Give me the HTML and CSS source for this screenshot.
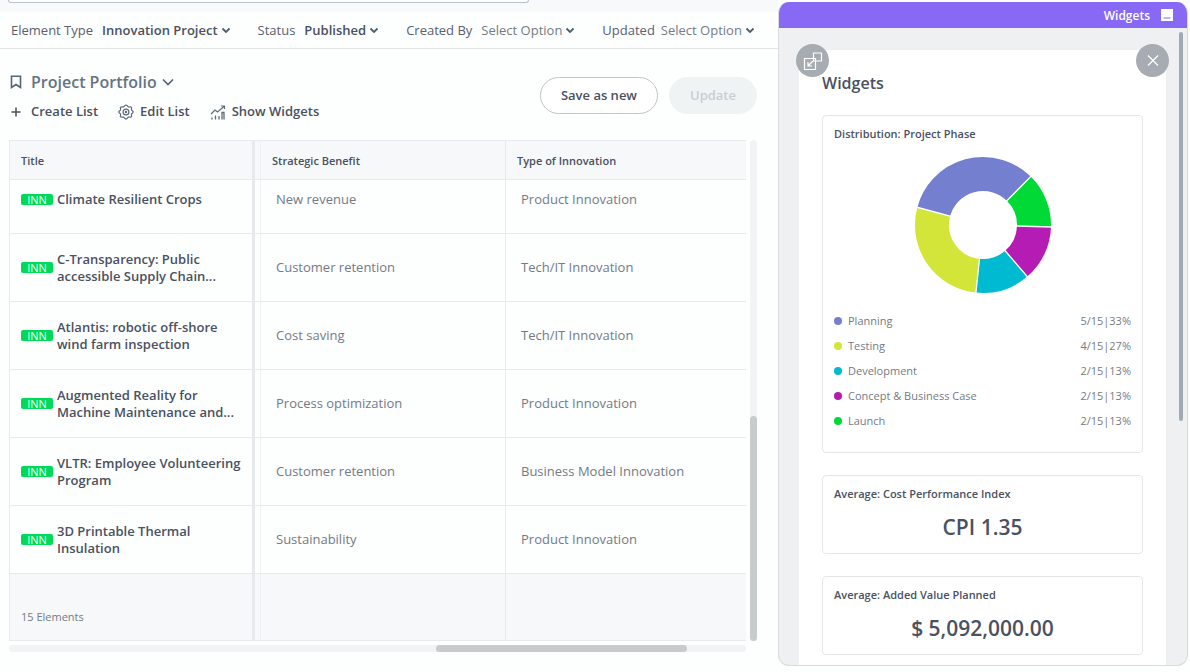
FILE: index.html
```
<!DOCTYPE html>
<html lang="en">
<head>
<meta charset="utf-8">
<title>Project Portfolio</title>
<link rel="stylesheet" href="styles.css">
</head>
<body>
<div class="app">
  <main class="main">
    <div class="search-strip"><div class="search-box"></div></div>
    <nav class="filters" aria-label="Filters">
      <div class="filter">
        <span class="filter-label" id="f1">Element Type</span>
        <button class="filter-value is-set" aria-describedby="f1">Innovation Project<svg class="chev" viewBox="0 0 10 10"><path d="M1.5 3.5 5 7l3.5-3.5"/></svg></button>
      </div>
      <div class="filter">
        <span class="filter-label" id="f2">Status</span>
        <button class="filter-value is-set" aria-describedby="f2">Published<svg class="chev" viewBox="0 0 10 10"><path d="M1.5 3.5 5 7l3.5-3.5"/></svg></button>
      </div>
      <div class="filter">
        <span class="filter-label" id="f3">Created By</span>
        <button class="filter-value" aria-describedby="f3">Select Option<svg class="chev" viewBox="0 0 10 10"><path d="M1.5 3.5 5 7l3.5-3.5"/></svg></button>
      </div>
      <div class="filter filter-tight">
        <span class="filter-label" id="f4">Updated</span>
        <button class="filter-value" aria-describedby="f4">Select Option<svg class="chev" viewBox="0 0 10 10"><path d="M1.5 3.5 5 7l3.5-3.5"/></svg></button>
      </div>
    </nav>
    <header class="list-head">
      <div class="list-info">
        <button class="list-title">
          <svg class="bookmark" viewBox="0 0 12 14"><path d="M1.5 1.2h9v11.3L6 9.5l-4.500 3z"/></svg>
          <span>Project Portfolio</span>
          <svg class="title-chev" viewBox="0 0 12 12"><path d="M1 3.5 6 8.5l5-5"/></svg>
        </button>
        <div class="actions">
          <button class="action"><svg class="plus" viewBox="0 0 10 10"><path d="M5 .5v9M.5 5h9"/></svg>Create List</button>
          <button class="action"><svg class="tool" viewBox="0 0 16 16"><path d="M8 1c1.200 0 1.400 1.500 2.400 1.900s2.100-.6 2.900.2-.2 1.900.2 2.800S15.200 7 15.200 8s-1.300 1.200-1.700 2.100.6 2-.2 2.800-1.900-.2-2.900.2S9.200 15 8 15s-1.400-1.500-2.400-1.900-2.100.6-2.900-.2.200-1.900-.2-2.800S.8 9 .8 8s1.300-1.200 1.700-2.100-.6-2 .2-2.800 1.900.2 2.900-.2S6.800 1 8 1z"/><circle cx="8" cy="8" r="2.900"/><circle cx="8" cy="8" r=".6" class="solid"/></svg>Edit List</button>
          <button class="action"><svg class="tool" viewBox="0 0 16 16"><path d="M1 10 5 6l2.500 2L14 2.500M11 2h3.500v3"/><path d="M2 15.500v-2M5.500 15.500v-4M9 15.500v-3.500M12 15.500V8.500h2v7" class="bars"/></svg>Show Widgets</button>
        </div>
      </div>
      <div class="list-buttons">
        <button class="pill">Save as new</button>
        <button class="pill pill-off" disabled>Update</button>
      </div>
    </header>
    <section class="grid">
      <table class="table">
        <colgroup><col class="c-title"><col class="c-gap"><col class="c-benefit"><col></colgroup>
        <thead><tr><th>Title</th><td class="split"></td><th>Strategic Benefit</th><th>Type of Innovation</th></tr></thead>
        <tbody>
          <tr class="cut"><td><div class="item"><span class="tag">INN</span><span>Climate Resilient Crops</span></div></td><td class="split"></td><td>New revenue</td><td>Product Innovation</td></tr>
          <tr><td><div class="item"><span class="tag">INN</span><span>C-Transparency: Public accessible Supply Chain...</span></div></td><td class="split"></td><td>Customer retention</td><td>Tech/IT Innovation</td></tr>
          <tr><td><div class="item"><span class="tag">INN</span><span>Atlantis: robotic off-shore wind farm inspection</span></div></td><td class="split"></td><td>Cost saving</td><td>Tech/IT Innovation</td></tr>
          <tr><td><div class="item"><span class="tag">INN</span><span>Augmented Reality for Machine Maintenance and...</span></div></td><td class="split"></td><td>Process optimization</td><td>Product Innovation</td></tr>
          <tr><td><div class="item"><span class="tag">INN</span><span>VLTR: Employee Volunteering Program</span></div></td><td class="split"></td><td>Customer retention</td><td>Business Model Innovation</td></tr>
          <tr><td><div class="item"><span class="tag">INN</span><span>3D Printable Thermal Insulation</span></div></td><td class="split"></td><td>Sustainability</td><td>Product Innovation</td></tr>
        </tbody>
        <tfoot><tr><td>15 Elements</td><td class="split"></td><td></td><td></td></tr></tfoot>
      </table>
      <div class="track-v"><div class="thumb-v"></div></div>
      <div class="track-h"><div class="thumb-h"></div></div>
    </section>
  </main>
  <aside class="panel">
    <div class="panel-bar">
      <span>Widgets</span>
      <button class="minimize" aria-label="Minimize"><svg viewBox="0 0 12 12"><path d="M0 0h12v12H0z" fill="#fff"/><path d="M2.500 9h7" stroke="#8769f5" stroke-width="1"/></svg></button>
    </div>
    <div class="panel-body">
      <div class="sheet">
        <button class="round round-left" aria-label="Pop out"><svg viewBox="0 0 20 20"><path d="M1.500 7.500h11v11h-11zM10.500 2h8v8h-8zM10 10l-5 5M5 11v4h4"/></svg></button>
        <button class="round round-right" aria-label="Close"><svg viewBox="0 0 20 20"><path d="m5 4.500 10 10M15 4.500l-10 10"/></svg></button>
        <h2>Widgets</h2>
        <section class="card">
          <h3>Distribution: Project Phase</h3>
          <svg class="donut" viewBox="-70 -70 140 140">
            <g fill="none" stroke-width="34">
              <path stroke="#747fcf" d="M-49.300-13.200A51 51 0 0 1 35.800-36.300"/>
              <path stroke="#00d936" d="M35.800-36.300A51 51 0 0 1 51 1.500"/>
              <path stroke="#b41cb4" d="M51 1.500A51 51 0 0 1 33.200 38.700"/>
              <path stroke="#00bad1" d="M33.200 38.700A51 51 0 0 1-5.300 50.700"/>
              <path stroke="#d4e53a" d="M-5.300 50.700A51 51 0 0 1-49.300-13.200"/>
            </g>
            <path stroke="#fff" stroke-width="1.300" d="M-30.900-8.300-67-18M23.200-23.600 48.700-49.400M33 1 69 2M21.500 25 45.500 53M-3.400 32.800-7.200 69"/>
          </svg>
          <ul class="legend">
            <li><i class="dot planning"></i>Planning<b>5/15|33%</b></li>
            <li><i class="dot testing"></i>Testing<b>4/15|27%</b></li>
            <li><i class="dot development"></i>Development<b>2/15|13%</b></li>
            <li><i class="dot concept"></i>Concept &amp; Business Case<b>2/15|13%</b></li>
            <li><i class="dot launch"></i>Launch<b>2/15|13%</b></li>
          </ul>
        </section>
        <section class="card"><h3>Average: Cost Performance Index</h3><p class="figure">CPI 1.35</p></section>
        <section class="card"><h3>Average: Added Value Planned</h3><p class="figure">$ 5,092,000.00</p></section>
      </div>
      <div class="panel-scroll"></div>
    </div>
  </aside>
</div>
</body>
</html>
```
FILE: styles.css
```
* { box-sizing: border-box; }
body { margin: 0; background: #fdfefe; color: #4a5161; font-family: "Open Sans", "Noto Sans", sans-serif; font-size: 13px; line-height: 17px; }
button { margin: 0; padding: 0; border: 0; background: none; color: inherit; font: inherit; }
svg { display: block; flex: none; fill: none; }
h2, h3, p, ul { margin: 0; padding: 0; }

.app { display: flex; height: 100vh; overflow: hidden; }
.main { flex: 1; min-width: 0; display: flex; flex-direction: column; }
.search-strip { height: 12px; background: #f7f9fa; }
.search-box { width: 67%; height: 3px; border-bottom: 1px solid #b9c2ca; border-left: 1px solid #b9c2ca; border-right: 1px solid #b9c2ca; border-radius: 0 0 8px 8px; background: #fff; margin-left: 8px; }

.filters { display: flex; gap: 27px; height: 37px; padding-left: 11px; align-items: center; border-bottom: 1px solid #e2e6e9; white-space: nowrap; }
.filter { display: flex; gap: 9px; }
.filter-tight { gap: 6px; }
.filter-label { color: #596070; }
.filter-value { display: flex; align-items: center; gap: 3px; color: #747b86; }
.is-set { color: #4a5161; font-weight: 600; }
.chev { width: 10px; height: 10px; stroke: #4d5d6c; stroke-width: 1.8; }

.list-head { display: flex; justify-content: space-between; padding: 22px 21px 0 10px; }
.list-title { display: flex; align-items: center; color: #667382; font-size: 16px; font-weight: 600; line-height: 22px; }
.bookmark { width: 12px; height: 14px; margin-right: 9px; stroke: #566575; stroke-width: 1.6; }
.title-chev { width: 12px; height: 12px; margin-left: 5px; stroke: #566575; stroke-width: 1.7; }
.actions { display: flex; gap: 20px; margin-top: 10px; }
.action { display: flex; align-items: center; gap: 6px; font-weight: 600; }
.plus { width: 10px; height: 10px; margin: 0 4px 0 1px; stroke: #4a5161; stroke-width: 1.5; }
.tool { width: 16px; height: 16px; stroke: #5f6a78; stroke-width: 1.2; }
.tool .solid { fill: #5f6a78; }
.tool .bars { stroke-width: 1.3; }
.list-buttons { display: flex; gap: 11px; padding-top: 6px; }
.pill { height: 37px; padding: 0 20px; border: 1px solid #bfc5cc; border-radius: 19px; background: #fff; font-weight: 600; }
.pill-off { border-color: #f0f3f4; background: #f0f3f4; color: #c8ced5; }

.grid { display: grid; grid-template-columns: 1fr 7px; column-gap: 4px; row-gap: 4px; margin: 20px 21px 0 9px; }
.table { width: 100%; table-layout: fixed; border-collapse: separate; border-spacing: 0; border-left: 1px solid #e6eaec; border-top: 1px solid #e6eaec; }
.c-title { width: 242px; }
.c-gap { width: 9px; }
.c-benefit { width: 245px; }
th { height: 39px; padding: 0 11px; background: #f6f8fa; border-bottom: 1px solid #e6eaec; text-align: left; font-size: 11px; font-weight: 600; }
td { height: 68px; padding: 0 15px; border-bottom: 1px solid #e6eaec; color: #747b86; }
td:first-child { padding: 0 11px; }
td:nth-child(3), th:nth-child(3) { border-right: 1px solid #e6eaec; }
td.split { height: auto; padding: 0; border-left: 3px solid #e6eaec; border-right: 1px solid #edf0f2; }
thead td, tfoot td { background: #f6f8fa; }
.cut td { height: 54px; padding-bottom: 14px; }
tfoot td { height: 67px; font-size: 11px; }
tfoot td:first-child { padding-top: 18px; }
.item { display: flex; align-items: center; gap: 4px; color: #4a5161; font-weight: 600; }
.tag { flex: none; width: 32px; height: 11px; border-radius: 2px; background: #00d95a; color: #e6fff0; font-size: 11px; font-weight: 400; line-height: 11px; text-align: center; }
.track-v { display: flex; align-items: flex-end; border-radius: 4px; background: #f1f3f4; }
.thumb-v { width: 100%; height: 45%; border-radius: 4px; background: #c7cbce; }
.track-h { height: 7px; border-radius: 4px; background: #f1f3f4; }
.thumb-h { width: 34%; height: 100%; margin-left: 58%; border-radius: 4px; background: #c7cbce; }

.panel { flex: none; width: 410px; margin: 2px 2px 6px 0; display: flex; flex-direction: column; overflow: hidden; border: 1px solid #d8dcdf; border-top: 0; border-radius: 11px; background: #eef0f2; }
.panel-bar { display: flex; flex: none; align-items: center; justify-content: flex-end; gap: 11px; height: 26px; padding-right: 14px; background: #8769f5; color: #fff; font-size: 12px; font-weight: 600; }
.minimize svg { width: 12px; height: 12px; }
.panel-body { position: relative; flex: 1; min-height: 0; padding: 22px 21px 0 20px; }
.sheet { position: relative; display: flex; flex-direction: column; gap: 22px; height: 100%; padding: 22px 23px 0; background: #fff; }
.sheet h2 { font-size: 16px; font-weight: 600; line-height: 22px; }
.sheet h2 + .card { margin-top: -1px; }
.card { padding: 9px 11px 10px; border: 1px solid #e3e7e9; border-radius: 4px; }
.card h3 { font-size: 11px; font-weight: 600; line-height: 17px; }
.figure { margin-top: 10px; font-size: 21px; font-weight: 600; line-height: 31px; text-align: center; }
.donut { width: 140px; height: 140px; margin: 13px auto 13px; }
.legend { padding-bottom: 9px; list-style: none; font-size: 11px; color: #747b86; }
.legend li { display: flex; align-items: center; height: 25px; }
.legend b { margin-left: auto; font-weight: 400; }
.dot { width: 8px; height: 8px; margin-right: 6px; border-radius: 50%; }
.planning { background: #747fcf; }
.testing { background: #d4e53a; }
.development { background: #00bad1; }
.concept { background: #b41cb4; }
.launch { background: #00d936; }
.round { position: absolute; top: -6px; width: 33px; height: 33px; display: grid; place-items: center; border-radius: 50%; background: #a7acb2; }
.round svg { width: 20px; height: 20px; stroke: #fff; stroke-width: 1.2; }
.round-left { left: -3px; }
.round-right { right: -3px; }
.panel-scroll { position: absolute; top: 4px; right: 4px; width: 4px; height: 61%; border-radius: 2px; background: #a2aab1; }
```
